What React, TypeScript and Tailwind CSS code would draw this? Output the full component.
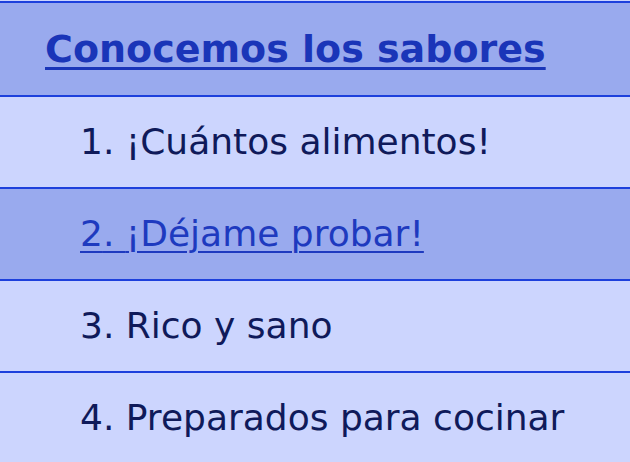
const items = [
  { n: 1, label: "¡Cuántos alimentos!" },
  { n: 2, label: "¡Déjame probar!", active: true },
  { n: 3, label: "Rico y sano" },
  { n: 4, label: "Preparados para cocinar" },
];

export default function App() {
  return (
    <div
      className="h-[462px] w-[630px] overflow-hidden bg-[#ccd5fe] pt-px"
      style={{ fontFamily: '"DejaVu Sans", Verdana, sans-serif' }}
    >
      <nav>
        <div className="flex h-[96px] items-center border-y-2 border-[#1d40dc] bg-[#99aaee] pl-[45px]">
          <a
            href="#"
            className="text-[38px] font-bold text-[#1a35b8] underline decoration-[3px] underline-offset-[5px]"
          >
            Conocemos los sabores
          </a>
        </div>
        <ol>
          {items.map((it) => (
            <li
              key={it.n}
              className={`flex h-[92px] items-center border-b-2 border-[#1d40dc] pl-[80px] text-[36px] ${
                it.active ? "bg-[#99aaee]" : "bg-[#ccd5fe]"
              }`}
            >
              {it.active ? (
                <a href="#" className="text-[#1e3abf] underline decoration-2 underline-offset-[5px]">
                  {it.n}. {it.label}
                </a>
              ) : (
                <span className="text-[#0f1a5a]">
                  {it.n}. {it.label}
                </span>
              )}
            </li>
          ))}
        </ol>
      </nav>
    </div>
  );
}
